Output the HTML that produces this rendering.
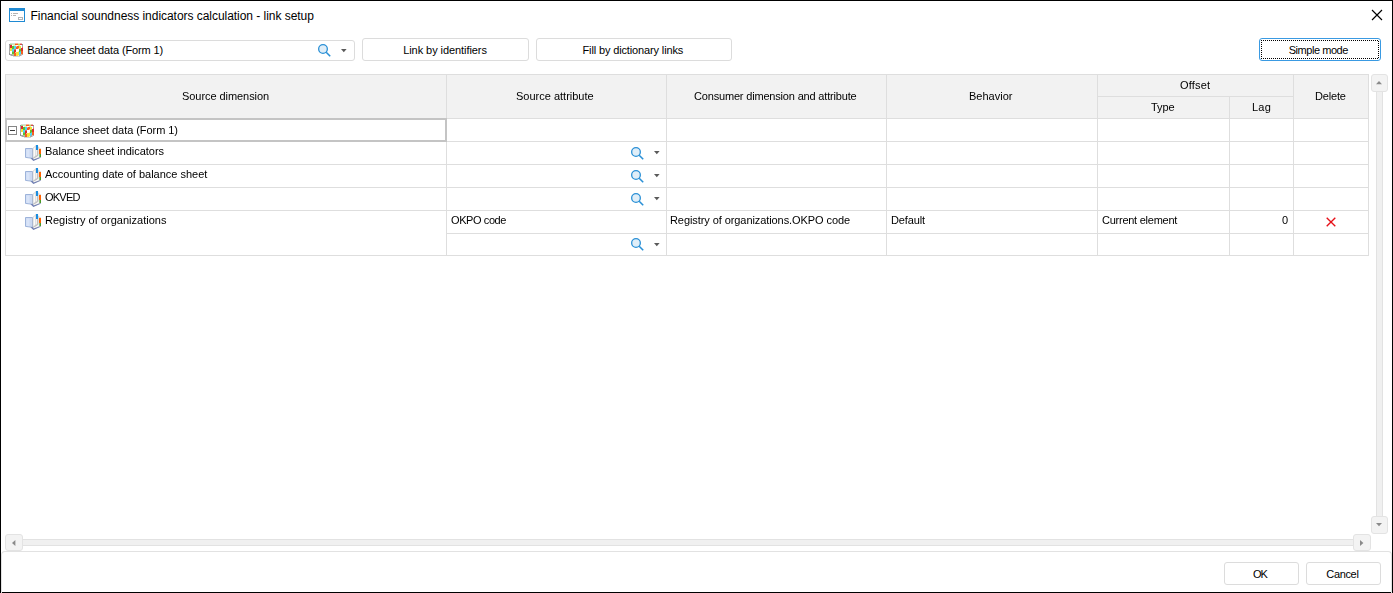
<!DOCTYPE html>
<html>
<head>
<meta charset="utf-8">
<title>Financial soundness indicators calculation - link setup</title>
<style>
*{box-sizing:border-box;margin:0;padding:0}
html,body{width:1393px;height:593px;overflow:hidden;background:#fff}
body{font-family:"Liberation Sans",sans-serif;font-size:11px;color:#000;position:relative}
.abs{position:absolute}
#win{position:absolute;left:0;top:0;width:1393px;height:593px;border:1px solid #000;background:#fff}
.ui{font-size:12px;white-space:nowrap;position:absolute;line-height:14px}
.btn{position:absolute;border:1px solid #dcdcdc;border-radius:3px;background:#fff}
.bt{position:absolute;white-space:nowrap;font-size:11px;line-height:13px;color:#000}
.t{position:absolute;white-space:nowrap;font-size:11px;line-height:13px;will-change:transform}
.hl{position:absolute;height:1px;background:#dedede}
.vl{position:absolute;width:1px;background:#dedede}
.sb{position:absolute;border:1px solid #e3e3e3;border-radius:3px;background:#f3f3f3}
svg{position:absolute;overflow:visible}
</style>
</head>
<body>
<div id="win"></div>

<!-- title bar -->
<svg style="left:9px;top:8px" width="16" height="14" viewBox="0 0 16 14" shape-rendering="crispEdges">
  <rect x="0.5" y="0.5" width="15" height="13" fill="#fff" stroke="#1f8ad3"/>
  <rect x="0" y="0" width="16" height="3" fill="#1f8ad3"/>
  <rect x="2" y="5" width="1" height="1" fill="#b4b4b4"/><rect x="4" y="5" width="5" height="1" fill="#b4b4b4"/>
  <rect x="2" y="7" width="1" height="1" fill="#b4b4b4"/><rect x="4" y="7" width="3" height="1" fill="#b4b4b4"/>
  <rect x="9.5" y="9.5" width="4" height="2" fill="#fff" stroke="#b4b4b4"/>
</svg>
<div class="ui" id="title" style="left:30.55px;top:9px;letter-spacing:-0.04px">Financial soundness indicators calculation - link setup</div>
<svg style="left:1371px;top:9px" width="12" height="12" viewBox="0 0 12 12">
  <path d="M1 1 L11 11 M11 1 L1 11" stroke="#000" stroke-width="1.15" fill="none"/>
</svg>

<!-- combo -->
<div class="abs" style="left:5px;top:40px;width:350px;height:21px;border:1px solid #dcdcdc;border-radius:3px;background:#fff"></div>
<svg style="left:9px;top:43px" width="14" height="14"><g shape-rendering="crispEdges"><rect x="1" y="0" width="5" height="1" fill="#d6e2d4"/><rect x="6" y="0" width="3" height="1" fill="#f8b090"/><rect x="9" y="0" width="2" height="1" fill="#e2eab8"/><rect x="11" y="0" width="2" height="1" fill="#eab0b0"/><rect x="0" y="1" width="1" height="1" fill="#909090"/><rect x="1" y="1" width="2" height="1" fill="#a4d48a"/><rect x="3" y="1" width="3" height="1" fill="#cfe9b8"/><rect x="6" y="1" width="3" height="1" fill="#f7601f"/><rect x="9" y="1" width="2" height="1" fill="#c8d850"/><rect x="11" y="1" width="2" height="1" fill="#d84848"/><rect x="13" y="1" width="1" height="1" fill="#909090"/><rect x="0" y="2" width="1" height="1" fill="#a8a8a8"/><rect x="1" y="2" width="2" height="1" fill="#dd2a2a"/><rect x="3" y="2" width="1" height="1" fill="#ffffff"/><rect x="4" y="2" width="3" height="1" fill="#f8f0b0"/><rect x="7" y="2" width="2" height="1" fill="#ffffff"/><rect x="9" y="2" width="2" height="1" fill="#cfe9b8"/><rect x="11" y="2" width="2" height="1" fill="#ffffff"/><rect x="13" y="2" width="1" height="1" fill="#a8a8a8"/><rect x="0" y="3" width="1" height="1" fill="#a8a8a8"/><rect x="1" y="3" width="2" height="1" fill="#dd2a2a"/><rect x="3" y="3" width="2" height="1" fill="#62c02c"/><rect x="5" y="3" width="2" height="1" fill="#48d8f4"/><rect x="7" y="3" width="1" height="1" fill="#f8b090"/><rect x="8" y="3" width="2" height="1" fill="#f7601f"/><rect x="10" y="3" width="2" height="1" fill="#f3e23a"/><rect x="12" y="3" width="1" height="1" fill="#ffffff"/><rect x="13" y="3" width="1" height="1" fill="#a8a8a8"/><rect x="0" y="4" width="1" height="1" fill="#a8a8a8"/><rect x="1" y="4" width="2" height="1" fill="#dd2a2a"/><rect x="3" y="4" width="2" height="1" fill="#62c02c"/><rect x="5" y="4" width="2" height="1" fill="#48d8f4"/><rect x="7" y="4" width="3" height="1" fill="#f7601f"/><rect x="10" y="4" width="2" height="1" fill="#f3e23a"/><rect x="12" y="4" width="1" height="1" fill="#ffffff"/><rect x="13" y="4" width="1" height="1" fill="#e86a6a"/><rect x="0" y="5" width="1" height="1" fill="#a8a8a8"/><rect x="1" y="5" width="2" height="1" fill="#f3e23a"/><rect x="3" y="5" width="2" height="1" fill="#62c02c"/><rect x="5" y="5" width="2" height="1" fill="#48d8f4"/><rect x="7" y="5" width="2" height="1" fill="#f7601f"/><rect x="9" y="5" width="1" height="1" fill="#f8b090"/><rect x="10" y="5" width="1" height="1" fill="#f3e23a"/><rect x="11" y="5" width="1" height="1" fill="#a4d48a"/><rect x="12" y="5" width="2" height="1" fill="#dd2a2a"/><rect x="0" y="6" width="1" height="1" fill="#a8a8a8"/><rect x="1" y="6" width="2" height="1" fill="#f3e23a"/><rect x="3" y="6" width="2" height="1" fill="#48d8f4"/><rect x="5" y="6" width="2" height="1" fill="#e86a6a"/><rect x="7" y="6" width="3" height="1" fill="#ffffff"/><rect x="10" y="6" width="2" height="1" fill="#62c02c"/><rect x="12" y="6" width="2" height="1" fill="#dd2a2a"/><rect x="0" y="7" width="1" height="1" fill="#a8a8a8"/><rect x="1" y="7" width="2" height="1" fill="#f3e23a"/><rect x="3" y="7" width="2" height="1" fill="#48d8f4"/><rect x="5" y="7" width="2" height="1" fill="#dd2a2a"/><rect x="7" y="7" width="3" height="1" fill="#ffffff"/><rect x="10" y="7" width="2" height="1" fill="#62c02c"/><rect x="12" y="7" width="2" height="1" fill="#dd2a2a"/><rect x="0" y="8" width="1" height="1" fill="#a8a8a8"/><rect x="1" y="8" width="2" height="1" fill="#ffffff"/><rect x="3" y="8" width="2" height="1" fill="#5ccc9c"/><rect x="5" y="8" width="2" height="1" fill="#dd2a2a"/><rect x="7" y="8" width="2" height="1" fill="#ffffff"/><rect x="9" y="8" width="1" height="1" fill="#f8f0b0"/><rect x="10" y="8" width="1" height="1" fill="#62c02c"/><rect x="11" y="8" width="1" height="1" fill="#5ccc9c"/><rect x="12" y="8" width="2" height="1" fill="#f7601f"/><rect x="0" y="9" width="1" height="1" fill="#a8a8a8"/><rect x="1" y="9" width="2" height="1" fill="#ffffff"/><rect x="3" y="9" width="2" height="1" fill="#62c02c"/><rect x="5" y="9" width="1" height="1" fill="#dd2a2a"/><rect x="6" y="9" width="1" height="1" fill="#f8b090"/><rect x="7" y="9" width="3" height="1" fill="#f3e23a"/><rect x="10" y="9" width="2" height="1" fill="#48d8f4"/><rect x="12" y="9" width="2" height="1" fill="#f7601f"/><rect x="0" y="10" width="1" height="1" fill="#909090"/><rect x="1" y="10" width="2" height="1" fill="#ffffff"/><rect x="3" y="10" width="2" height="1" fill="#62c02c"/><rect x="5" y="10" width="2" height="1" fill="#f7601f"/><rect x="7" y="10" width="3" height="1" fill="#f3e23a"/><rect x="10" y="10" width="2" height="1" fill="#48d8f4"/><rect x="12" y="10" width="2" height="1" fill="#f7601f"/><rect x="0" y="11" width="1" height="1" fill="#909090"/><rect x="1" y="11" width="2" height="1" fill="#a8a8a8"/><rect x="3" y="11" width="2" height="1" fill="#a4d48a"/><rect x="5" y="11" width="2" height="1" fill="#f7601f"/><rect x="7" y="11" width="3" height="1" fill="#f3e23a"/><rect x="10" y="11" width="1" height="1" fill="#48d8f4"/><rect x="11" y="11" width="1" height="1" fill="#a8a8a8"/><rect x="12" y="11" width="1" height="1" fill="#f8b090"/><rect x="13" y="11" width="1" height="1" fill="#a8a8a8"/><rect x="1" y="12" width="1" height="1" fill="#d4d4d4"/><rect x="2" y="12" width="3" height="1" fill="#a8a8a8"/><rect x="5" y="12" width="2" height="1" fill="#f7601f"/><rect x="7" y="12" width="2" height="1" fill="#f3e23a"/><rect x="9" y="12" width="1" height="1" fill="#f8f0b0"/><rect x="10" y="12" width="2" height="1" fill="#a8a8a8"/><rect x="12" y="12" width="1" height="1" fill="#d4d4d4"/><rect x="4" y="13" width="7" height="1" fill="#d4d4d4"/></g></svg>
<div class="bt" id="combo" style="left:27.18px;top:44px;letter-spacing:-0.132px">Balance sheet data (Form 1)</div>
<svg style="left:323px;top:49px" width="1" height="1"><g>
      <circle cx="0" cy="0" r="4.35" fill="#e0eef8" stroke="#2a90d6" stroke-width="1.3"/>
      <path d="M3.2 3.2 L7.2 7.2" stroke="#2a90d6" stroke-width="1.6" stroke-linecap="butt"/>
    </g></svg>
<svg style="left:340.6px;top:49px" width="6" height="4"><path d="M0 0 L5.6 0 L2.8 3.2 Z" fill="#5a5a5a"/></svg>

<!-- buttons -->
<div class="btn" style="left:362px;top:38px;width:167px;height:23px"></div>
<div class="bt" id="b1" style="left:403.19px;top:44px;letter-spacing:-0.069px">Link by identifiers</div>
<div class="btn" style="left:536px;top:38px;width:196px;height:23px"></div>
<div class="bt" id="b2" style="left:582.5px;top:44px;letter-spacing:-0.136px">Fill by dictionary links</div>
<div class="btn" style="left:1259px;top:38px;width:122px;height:23px;border-color:#3a9ae2"></div>
<svg style="left:1261px;top:40px" width="118" height="19" shape-rendering="crispEdges"><g stroke="#000" stroke-width="1" stroke-dasharray="1 1" fill="none"><path d="M0 0.5 H118"/><path d="M0 18.5 H118"/><path d="M0.5 0 V19"/><path d="M117.5 1 V19"/></g></svg>
<div class="bt" id="b3" style="left:1288.68px;top:44px;letter-spacing:-0.448px">Simple mode</div>
<div class="btn" style="left:1224px;top:562px;width:75px;height:23px"></div>
<div class="bt" id="b4" style="left:1253.12px;top:568px;letter-spacing:-1.186px">OK</div>
<div class="btn" style="left:1306px;top:562px;width:75px;height:23px"></div>
<div class="bt" id="b5" style="left:1326.29px;top:568px;letter-spacing:-0.338px">Cancel</div>

<!-- table header bg -->
<div class="abs" style="left:5px;top:74px;width:1364px;height:45px;background:#f2f2f2"></div>
<!-- grid lines horizontal -->
<div class="hl" style="left:5px;top:74px;width:1364px"></div>
<div class="hl" style="left:1097px;top:96px;width:197px"></div>
<div class="hl" style="left:5px;top:118px;width:1364px"></div>
<div class="hl" style="left:5px;top:141px;width:1364px"></div>
<div class="hl" style="left:5px;top:164px;width:1364px"></div>
<div class="hl" style="left:5px;top:187px;width:1364px"></div>
<div class="hl" style="left:5px;top:210px;width:1364px"></div>
<div class="hl" style="left:446px;top:233px;width:923px"></div>
<div class="hl" style="left:5px;top:255px;width:1364px"></div>
<!-- grid lines vertical -->
<div class="vl" style="left:5px;top:74px;height:182px"></div>
<div class="vl" style="left:446px;top:74px;height:182px"></div>
<div class="vl" style="left:666px;top:74px;height:182px"></div>
<div class="vl" style="left:886px;top:74px;height:182px"></div>
<div class="vl" style="left:1097px;top:74px;height:182px"></div>
<div class="vl" style="left:1229px;top:96px;height:160px"></div>
<div class="vl" style="left:1293px;top:74px;height:182px"></div>
<div class="vl" style="left:1368px;top:74px;height:182px"></div>
<!-- selected cell -->
<div class="abs" style="left:5px;top:118px;width:442px;height:24px;border:2px solid #c4c4c4"></div>

<!-- header text -->
<div class="t" id="h1" style="left:181.7px;top:90px;letter-spacing:-0.061px">Source dimension</div>
<div class="t" id="h2" style="left:515.7px;top:90px">Source attribute</div>
<div class="t" id="h3" style="left:694.07px;top:90px;letter-spacing:-0.177px">Consumer dimension and attribute</div>
<div class="t" id="h4" style="left:968.93px;top:90px">Behavior</div>
<div class="t" id="h5" style="left:1179.82px;top:79px;letter-spacing:0.195px">Offset</div>
<div class="t" id="h6" style="left:1150.94px;top:101px;letter-spacing:-0.048px">Type</div>
<div class="t" id="h7" style="left:1251.5px;top:101px;letter-spacing:0.2px">Lag</div>
<div class="t" id="h8" style="left:1314.9px;top:90px;letter-spacing:-0.178px">Delete</div>

<!-- tree -->
<svg style="left:8px;top:126px" width="9" height="9" shape-rendering="crispEdges">
  <rect x="0.5" y="0.5" width="8" height="8" fill="#fff" stroke="#868686"/>
  <rect x="2" y="4" width="5" height="1" fill="#3a3a3a"/>
</svg>
<svg style="left:20px;top:124px" width="14" height="14"><g shape-rendering="crispEdges"><rect x="1" y="0" width="5" height="1" fill="#d6e2d4"/><rect x="6" y="0" width="3" height="1" fill="#f8b090"/><rect x="9" y="0" width="2" height="1" fill="#e2eab8"/><rect x="11" y="0" width="2" height="1" fill="#eab0b0"/><rect x="0" y="1" width="1" height="1" fill="#909090"/><rect x="1" y="1" width="2" height="1" fill="#a4d48a"/><rect x="3" y="1" width="3" height="1" fill="#cfe9b8"/><rect x="6" y="1" width="3" height="1" fill="#f7601f"/><rect x="9" y="1" width="2" height="1" fill="#c8d850"/><rect x="11" y="1" width="2" height="1" fill="#d84848"/><rect x="13" y="1" width="1" height="1" fill="#909090"/><rect x="0" y="2" width="1" height="1" fill="#a8a8a8"/><rect x="1" y="2" width="2" height="1" fill="#dd2a2a"/><rect x="3" y="2" width="1" height="1" fill="#ffffff"/><rect x="4" y="2" width="3" height="1" fill="#f8f0b0"/><rect x="7" y="2" width="2" height="1" fill="#ffffff"/><rect x="9" y="2" width="2" height="1" fill="#cfe9b8"/><rect x="11" y="2" width="2" height="1" fill="#ffffff"/><rect x="13" y="2" width="1" height="1" fill="#a8a8a8"/><rect x="0" y="3" width="1" height="1" fill="#a8a8a8"/><rect x="1" y="3" width="2" height="1" fill="#dd2a2a"/><rect x="3" y="3" width="2" height="1" fill="#62c02c"/><rect x="5" y="3" width="2" height="1" fill="#48d8f4"/><rect x="7" y="3" width="1" height="1" fill="#f8b090"/><rect x="8" y="3" width="2" height="1" fill="#f7601f"/><rect x="10" y="3" width="2" height="1" fill="#f3e23a"/><rect x="12" y="3" width="1" height="1" fill="#ffffff"/><rect x="13" y="3" width="1" height="1" fill="#a8a8a8"/><rect x="0" y="4" width="1" height="1" fill="#a8a8a8"/><rect x="1" y="4" width="2" height="1" fill="#dd2a2a"/><rect x="3" y="4" width="2" height="1" fill="#62c02c"/><rect x="5" y="4" width="2" height="1" fill="#48d8f4"/><rect x="7" y="4" width="3" height="1" fill="#f7601f"/><rect x="10" y="4" width="2" height="1" fill="#f3e23a"/><rect x="12" y="4" width="1" height="1" fill="#ffffff"/><rect x="13" y="4" width="1" height="1" fill="#e86a6a"/><rect x="0" y="5" width="1" height="1" fill="#a8a8a8"/><rect x="1" y="5" width="2" height="1" fill="#f3e23a"/><rect x="3" y="5" width="2" height="1" fill="#62c02c"/><rect x="5" y="5" width="2" height="1" fill="#48d8f4"/><rect x="7" y="5" width="2" height="1" fill="#f7601f"/><rect x="9" y="5" width="1" height="1" fill="#f8b090"/><rect x="10" y="5" width="1" height="1" fill="#f3e23a"/><rect x="11" y="5" width="1" height="1" fill="#a4d48a"/><rect x="12" y="5" width="2" height="1" fill="#dd2a2a"/><rect x="0" y="6" width="1" height="1" fill="#a8a8a8"/><rect x="1" y="6" width="2" height="1" fill="#f3e23a"/><rect x="3" y="6" width="2" height="1" fill="#48d8f4"/><rect x="5" y="6" width="2" height="1" fill="#e86a6a"/><rect x="7" y="6" width="3" height="1" fill="#ffffff"/><rect x="10" y="6" width="2" height="1" fill="#62c02c"/><rect x="12" y="6" width="2" height="1" fill="#dd2a2a"/><rect x="0" y="7" width="1" height="1" fill="#a8a8a8"/><rect x="1" y="7" width="2" height="1" fill="#f3e23a"/><rect x="3" y="7" width="2" height="1" fill="#48d8f4"/><rect x="5" y="7" width="2" height="1" fill="#dd2a2a"/><rect x="7" y="7" width="3" height="1" fill="#ffffff"/><rect x="10" y="7" width="2" height="1" fill="#62c02c"/><rect x="12" y="7" width="2" height="1" fill="#dd2a2a"/><rect x="0" y="8" width="1" height="1" fill="#a8a8a8"/><rect x="1" y="8" width="2" height="1" fill="#ffffff"/><rect x="3" y="8" width="2" height="1" fill="#5ccc9c"/><rect x="5" y="8" width="2" height="1" fill="#dd2a2a"/><rect x="7" y="8" width="2" height="1" fill="#ffffff"/><rect x="9" y="8" width="1" height="1" fill="#f8f0b0"/><rect x="10" y="8" width="1" height="1" fill="#62c02c"/><rect x="11" y="8" width="1" height="1" fill="#5ccc9c"/><rect x="12" y="8" width="2" height="1" fill="#f7601f"/><rect x="0" y="9" width="1" height="1" fill="#a8a8a8"/><rect x="1" y="9" width="2" height="1" fill="#ffffff"/><rect x="3" y="9" width="2" height="1" fill="#62c02c"/><rect x="5" y="9" width="1" height="1" fill="#dd2a2a"/><rect x="6" y="9" width="1" height="1" fill="#f8b090"/><rect x="7" y="9" width="3" height="1" fill="#f3e23a"/><rect x="10" y="9" width="2" height="1" fill="#48d8f4"/><rect x="12" y="9" width="2" height="1" fill="#f7601f"/><rect x="0" y="10" width="1" height="1" fill="#909090"/><rect x="1" y="10" width="2" height="1" fill="#ffffff"/><rect x="3" y="10" width="2" height="1" fill="#62c02c"/><rect x="5" y="10" width="2" height="1" fill="#f7601f"/><rect x="7" y="10" width="3" height="1" fill="#f3e23a"/><rect x="10" y="10" width="2" height="1" fill="#48d8f4"/><rect x="12" y="10" width="2" height="1" fill="#f7601f"/><rect x="0" y="11" width="1" height="1" fill="#909090"/><rect x="1" y="11" width="2" height="1" fill="#a8a8a8"/><rect x="3" y="11" width="2" height="1" fill="#a4d48a"/><rect x="5" y="11" width="2" height="1" fill="#f7601f"/><rect x="7" y="11" width="3" height="1" fill="#f3e23a"/><rect x="10" y="11" width="1" height="1" fill="#48d8f4"/><rect x="11" y="11" width="1" height="1" fill="#a8a8a8"/><rect x="12" y="11" width="1" height="1" fill="#f8b090"/><rect x="13" y="11" width="1" height="1" fill="#a8a8a8"/><rect x="1" y="12" width="1" height="1" fill="#d4d4d4"/><rect x="2" y="12" width="3" height="1" fill="#a8a8a8"/><rect x="5" y="12" width="2" height="1" fill="#f7601f"/><rect x="7" y="12" width="2" height="1" fill="#f3e23a"/><rect x="9" y="12" width="1" height="1" fill="#f8f0b0"/><rect x="10" y="12" width="2" height="1" fill="#a8a8a8"/><rect x="12" y="12" width="1" height="1" fill="#d4d4d4"/><rect x="4" y="13" width="7" height="1" fill="#d4d4d4"/></g></svg>
<svg style="left:25px;top:145px" width="16" height="16"><g>
      <path d="M0.5 3.5 L7.5 3.5 L7.5 13.3 L0.5 12.4 Z" fill="#cbd9f2" stroke="#9db3da" stroke-width="1"/>
      <path d="M1.4 4.4 L4.5 4.4 L4.5 12.2 L1.4 11.7 Z" fill="#d9e4f8" stroke="none"/>
      <path d="M8 3.3 L11 0.6 L11 10.6 L8 13.2 Z" fill="#fafafa" stroke="#c4c4c4" stroke-width="0.7"/>
      <path d="M11 0.8 L13 0.8 L13 10 L11 11 Z" fill="#ffffff" stroke="#d0d0d0" stroke-width="0.6"/>
      <path d="M13 2.6 L15.5 3.6 L15.5 12.3 L9.2 14.6 L8.2 13.2 L13 10.6 Z" fill="#f5f5f5" stroke="#c2c2c2" stroke-width="0.7"/>
      <path d="M12.6 5.2 L12.6 10.4 L9.4 12.6" fill="none" stroke="#b4b4b4" stroke-width="0.8"/>
      <rect x="11" y="0" width="2" height="5" fill="#1b8de0"/>
      <rect x="14" y="4" width="2" height="5" fill="#ff6200"/>
      <rect x="14.4" y="9" width="1.6" height="3" fill="#4a9a28"/>
      <path d="M5.5 13.2 L8.4 16 L15.6 12.8 L15.6 12 L8.8 14.4 L7.6 12.9 Z" fill="#6f7eb2"/>
    </g></svg>
<svg style="left:25px;top:168px" width="16" height="16"><g>
      <path d="M0.5 3.5 L7.5 3.5 L7.5 13.3 L0.5 12.4 Z" fill="#cbd9f2" stroke="#9db3da" stroke-width="1"/>
      <path d="M1.4 4.4 L4.5 4.4 L4.5 12.2 L1.4 11.7 Z" fill="#d9e4f8" stroke="none"/>
      <path d="M8 3.3 L11 0.6 L11 10.6 L8 13.2 Z" fill="#fafafa" stroke="#c4c4c4" stroke-width="0.7"/>
      <path d="M11 0.8 L13 0.8 L13 10 L11 11 Z" fill="#ffffff" stroke="#d0d0d0" stroke-width="0.6"/>
      <path d="M13 2.6 L15.5 3.6 L15.5 12.3 L9.2 14.6 L8.2 13.2 L13 10.6 Z" fill="#f5f5f5" stroke="#c2c2c2" stroke-width="0.7"/>
      <path d="M12.6 5.2 L12.6 10.4 L9.4 12.6" fill="none" stroke="#b4b4b4" stroke-width="0.8"/>
      <rect x="11" y="0" width="2" height="5" fill="#1b8de0"/>
      <rect x="14" y="4" width="2" height="5" fill="#ff6200"/>
      <rect x="14.4" y="9" width="1.6" height="3" fill="#4a9a28"/>
      <path d="M5.5 13.2 L8.4 16 L15.6 12.8 L15.6 12 L8.8 14.4 L7.6 12.9 Z" fill="#6f7eb2"/>
    </g></svg>
<svg style="left:25px;top:191px" width="16" height="16"><g>
      <path d="M0.5 3.5 L7.5 3.5 L7.5 13.3 L0.5 12.4 Z" fill="#cbd9f2" stroke="#9db3da" stroke-width="1"/>
      <path d="M1.4 4.4 L4.5 4.4 L4.5 12.2 L1.4 11.7 Z" fill="#d9e4f8" stroke="none"/>
      <path d="M8 3.3 L11 0.6 L11 10.6 L8 13.2 Z" fill="#fafafa" stroke="#c4c4c4" stroke-width="0.7"/>
      <path d="M11 0.8 L13 0.8 L13 10 L11 11 Z" fill="#ffffff" stroke="#d0d0d0" stroke-width="0.6"/>
      <path d="M13 2.6 L15.5 3.6 L15.5 12.3 L9.2 14.6 L8.2 13.2 L13 10.6 Z" fill="#f5f5f5" stroke="#c2c2c2" stroke-width="0.7"/>
      <path d="M12.6 5.2 L12.6 10.4 L9.4 12.6" fill="none" stroke="#b4b4b4" stroke-width="0.8"/>
      <rect x="11" y="0" width="2" height="5" fill="#1b8de0"/>
      <rect x="14" y="4" width="2" height="5" fill="#ff6200"/>
      <rect x="14.4" y="9" width="1.6" height="3" fill="#4a9a28"/>
      <path d="M5.5 13.2 L8.4 16 L15.6 12.8 L15.6 12 L8.8 14.4 L7.6 12.9 Z" fill="#6f7eb2"/>
    </g></svg>
<svg style="left:25px;top:214px" width="16" height="16"><g>
      <path d="M0.5 3.5 L7.5 3.5 L7.5 13.3 L0.5 12.4 Z" fill="#cbd9f2" stroke="#9db3da" stroke-width="1"/>
      <path d="M1.4 4.4 L4.5 4.4 L4.5 12.2 L1.4 11.7 Z" fill="#d9e4f8" stroke="none"/>
      <path d="M8 3.3 L11 0.6 L11 10.6 L8 13.2 Z" fill="#fafafa" stroke="#c4c4c4" stroke-width="0.7"/>
      <path d="M11 0.8 L13 0.8 L13 10 L11 11 Z" fill="#ffffff" stroke="#d0d0d0" stroke-width="0.6"/>
      <path d="M13 2.6 L15.5 3.6 L15.5 12.3 L9.2 14.6 L8.2 13.2 L13 10.6 Z" fill="#f5f5f5" stroke="#c2c2c2" stroke-width="0.7"/>
      <path d="M12.6 5.2 L12.6 10.4 L9.4 12.6" fill="none" stroke="#b4b4b4" stroke-width="0.8"/>
      <rect x="11" y="0" width="2" height="5" fill="#1b8de0"/>
      <rect x="14" y="4" width="2" height="5" fill="#ff6200"/>
      <rect x="14.4" y="9" width="1.6" height="3" fill="#4a9a28"/>
      <path d="M5.5 13.2 L8.4 16 L15.6 12.8 L15.6 12 L8.8 14.4 L7.6 12.9 Z" fill="#6f7eb2"/>
    </g></svg>

<!-- rows text -->
<div class="t" id="r0" style="left:39.53px;top:124px;letter-spacing:-0.054px">Balance sheet data (Form 1)</div>
<div class="t" id="r1" style="left:44.53px;top:145px;letter-spacing:-0.036px">Balance sheet indicators</div>
<div class="t" id="r2" style="left:45.32px;top:168px;letter-spacing:-0.012px">Accounting date of balance sheet</div>
<div class="t" id="r3" style="left:45.05px;top:191px;letter-spacing:-0.785px">OKVED</div>
<div class="t" id="r4" style="left:44.53px;top:214px;letter-spacing:0.016px">Registry of organizations</div>
<div class="t" id="c1" style="left:451.05px;top:214px;letter-spacing:-0.408px">OKPO code</div>
<div class="t" id="c2" style="left:670.41px;top:214px;letter-spacing:-0.079px">Registry of organizations.OKPO code</div>
<div class="t" id="c3" style="left:890.5px;top:214px;letter-spacing:-0.144px">Default</div>
<div class="t" id="c4" style="left:1101.54px;top:214px;letter-spacing:-0.25px">Current element</div>
<div class="t" id="c5" style="left:1282.35px;top:214px">0</div>

<!-- cell editors -->
<svg style="left:636px;top:152px" width="1" height="1"><g>
      <circle cx="0" cy="0" r="4.35" fill="#e0eef8" stroke="#2a90d6" stroke-width="1.3"/>
      <path d="M3.2 3.2 L7.2 7.2" stroke="#2a90d6" stroke-width="1.6" stroke-linecap="butt"/>
    </g></svg>
<svg style="left:653.6px;top:151px" width="6" height="4"><path d="M0 0 L5.6 0 L2.8 3.2 Z" fill="#5a5a5a"/></svg>
<svg style="left:636px;top:175px" width="1" height="1"><g>
      <circle cx="0" cy="0" r="4.35" fill="#e0eef8" stroke="#2a90d6" stroke-width="1.3"/>
      <path d="M3.2 3.2 L7.2 7.2" stroke="#2a90d6" stroke-width="1.6" stroke-linecap="butt"/>
    </g></svg>
<svg style="left:653.6px;top:174px" width="6" height="4"><path d="M0 0 L5.6 0 L2.8 3.2 Z" fill="#5a5a5a"/></svg>
<svg style="left:636px;top:198px" width="1" height="1"><g>
      <circle cx="0" cy="0" r="4.35" fill="#e0eef8" stroke="#2a90d6" stroke-width="1.3"/>
      <path d="M3.2 3.2 L7.2 7.2" stroke="#2a90d6" stroke-width="1.6" stroke-linecap="butt"/>
    </g></svg>
<svg style="left:653.6px;top:197px" width="6" height="4"><path d="M0 0 L5.6 0 L2.8 3.2 Z" fill="#5a5a5a"/></svg>
<svg style="left:636px;top:243px" width="1" height="1"><g>
      <circle cx="0" cy="0" r="4.35" fill="#e0eef8" stroke="#2a90d6" stroke-width="1.3"/>
      <path d="M3.2 3.2 L7.2 7.2" stroke="#2a90d6" stroke-width="1.6" stroke-linecap="butt"/>
    </g></svg>
<svg style="left:653.6px;top:243px" width="6" height="4"><path d="M0 0 L5.6 0 L2.8 3.2 Z" fill="#5a5a5a"/></svg>

<!-- delete X -->
<svg style="left:1326px;top:217px" width="10" height="10" viewBox="0 0 10 10">
  <path d="M0.7 0.7 L9.3 9.3 M9.3 0.7 L0.7 9.3" stroke="#e60f17" stroke-width="1.35" fill="none"/>
</svg>

<!-- scrollbars -->
<div class="abs" style="left:1376px;top:90px;width:7px;height:428px;background:#f0f0f0;border-left:1px solid #e2e2e2;border-right:1px solid #e2e2e2"></div>
<div class="sb" style="left:1371px;top:74px;width:17px;height:18px"></div>
<svg style="left:1376.3px;top:80.7px" width="6" height="3"><path d="M0 3.2 L6 3.2 L3 0 Z" fill="#8a8a8a"/></svg>
<div class="sb" style="left:1371px;top:516px;width:17px;height:18px"></div>
<svg style="left:1376.4px;top:522.8px" width="6" height="3"><path d="M0 0 L6 0 L3 3.2 Z" fill="#8a8a8a"/></svg>
<div class="abs" style="left:20px;top:539px;width:1336px;height:7px;background:#f0f0f0;border-top:1px solid #e2e2e2;border-bottom:1px solid #e2e2e2"></div>
<div class="sb" style="left:5px;top:534px;width:18px;height:17px"></div>
<svg style="left:11.6px;top:539.5px" width="4" height="6"><path d="M3.4 0 L3.4 6 L0 3 Z" fill="#8a8a8a"/></svg>
<div class="sb" style="left:1353px;top:534px;width:18px;height:17px"></div>
<svg style="left:1360px;top:539.5px" width="4" height="6"><path d="M0 0 L0 6 L3.4 3 Z" fill="#8a8a8a"/></svg>

<!-- bottom panel -->
<div class="abs" style="left:1px;top:551px;width:1391px;height:44px;border:1px solid #e2e2e2;border-radius:4px 4px 0 0;border-bottom:none"></div>
</body>
</html>
